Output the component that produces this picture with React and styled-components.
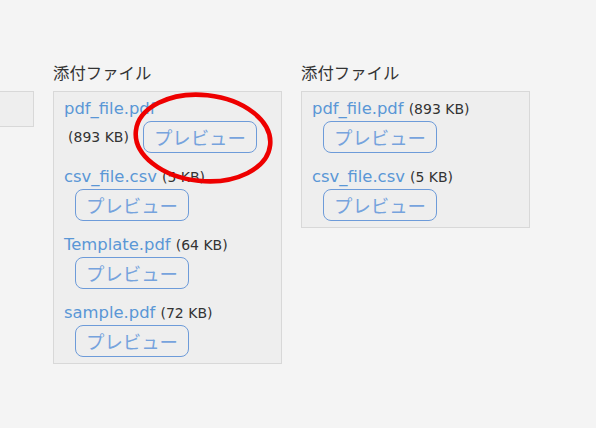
import React from 'react';
import styled, { createGlobalStyle } from 'styled-components';

const columns = [
    { id: 'prev', title: null, files: [] },
    {
        id: 'broken',
        title: '添付ファイル',
        files: [
            { name: 'pdf_file.pdf', size: '893 KB', split: true },
            { name: 'csv_file.csv', size: '5 KB' },
            { name: 'Template.pdf', size: '64 KB' },
            { name: 'sample.pdf', size: '72 KB' },
        ],
    },
    {
        id: 'fixed',
        title: '添付ファイル',
        files: [
            { name: 'pdf_file.pdf', size: '893 KB' },
            { name: 'csv_file.csv', size: '5 KB' },
        ],
    },
];

function FileItem({ file }) {
    const size = <Size>({file.size})</Size>;

    return (
        <Item>
            <NameLine>
                <FileLink href="#">{file.name}</FileLink>
                {file.split ? null : <> {size}</>}
            </NameLine>
            <ActionLine split={file.split ? 1 : 0}>
                {file.split ? size : null}
                <PreviewButton type="button">プレビュー</PreviewButton>
            </ActionLine>
        </Item>
    );
}

// red hand-drawn style circle marking the wrapped preview button
function Marker() {
    return (
        <MarkerSvg width="150" height="100" viewBox="0 0 150 100">
            <ellipse
                cx="75"
                cy="50"
                rx="67.5"
                ry="43"
                transform="rotate(6 75 50)"
                fill="none"
                stroke="#ee0000"
                strokeWidth="4.6"
            />
        </MarkerSvg>
    );
}

function App() {
    return (
        <Page>
            <GlobalStyle />
            <Columns>
                {columns.map(col => (
                    <Column key={col.id}>
                        <Title>{col.title}</Title>
                        <Panel>
                            {col.files.length === 0 ? <EmptyLine /> : null}
                            {col.files.map(file => (
                                <FileItem key={file.name} file={file} />
                            ))}
                        </Panel>
                    </Column>
                ))}
            </Columns>
            <Marker />
        </Page>
    );
}

export default App;

const GlobalStyle = createGlobalStyle`
    html, body {
        margin: 0;
        background: #f4f4f4;
        overflow: hidden;
    }
    body {
        font-family: "DejaVu Sans", "Noto Sans CJK JP", sans-serif;
        color: #333;
    }
`

const Page = styled.div`
    position: relative;
    padding-top: 60px;
    height: 368px;
`

const Columns = styled.div`
    display: flex;
    align-items: flex-start;
    gap: 19px;
    margin-left: -195px;
`

const Column = styled.div`
    width: 229px;
    flex-shrink: 0;
`

const Title = styled.div`
    font-family: "Noto Sans CJK JP", sans-serif;
    font-size: 16.4px;
    line-height: 24px;
    min-height: 24px;
    color: #333;
    margin-bottom: 7px;
`

const Panel = styled.div`
    background: #eeeeee;
    border: 1px solid #d8d8d8;
    padding: 6px 10px;
`

const EmptyLine = styled.div`
    height: 22px;
`

const Item = styled.div`
    margin-bottom: 13px;

    &:last-child {
        margin-bottom: 0;
    }
`

const NameLine = styled.div`
    line-height: 22px;
    font-size: 16px;
    white-space: nowrap;
`

const FileLink = styled.a`
    color: #5a97d6;
    text-decoration: none;
    font-size: 16.4px;
`

const Size = styled.span`
    font-size: 14px;
    color: #333;
`

const ActionLine = styled.div`
    display: flex;
    align-items: center;
    gap: 14px;
    margin-top: 1px;
    padding-left: ${p => (p.split ? 4 : 11)}px;
`

const PreviewButton = styled.button`
    font-family: "Noto Sans CJK JP", sans-serif;
    font-size: 18.4px;
    line-height: 30px;
    height: 32px;
    padding: 0 10px;
    color: #76a3dd;
    background: transparent;
    border: 1px solid #6d9bd9;
    border-radius: 8px;
    cursor: pointer;
`

const MarkerSvg = styled.svg`
    position: absolute;
    left: 128px;
    top: 88px;
    pointer-events: none;
`
